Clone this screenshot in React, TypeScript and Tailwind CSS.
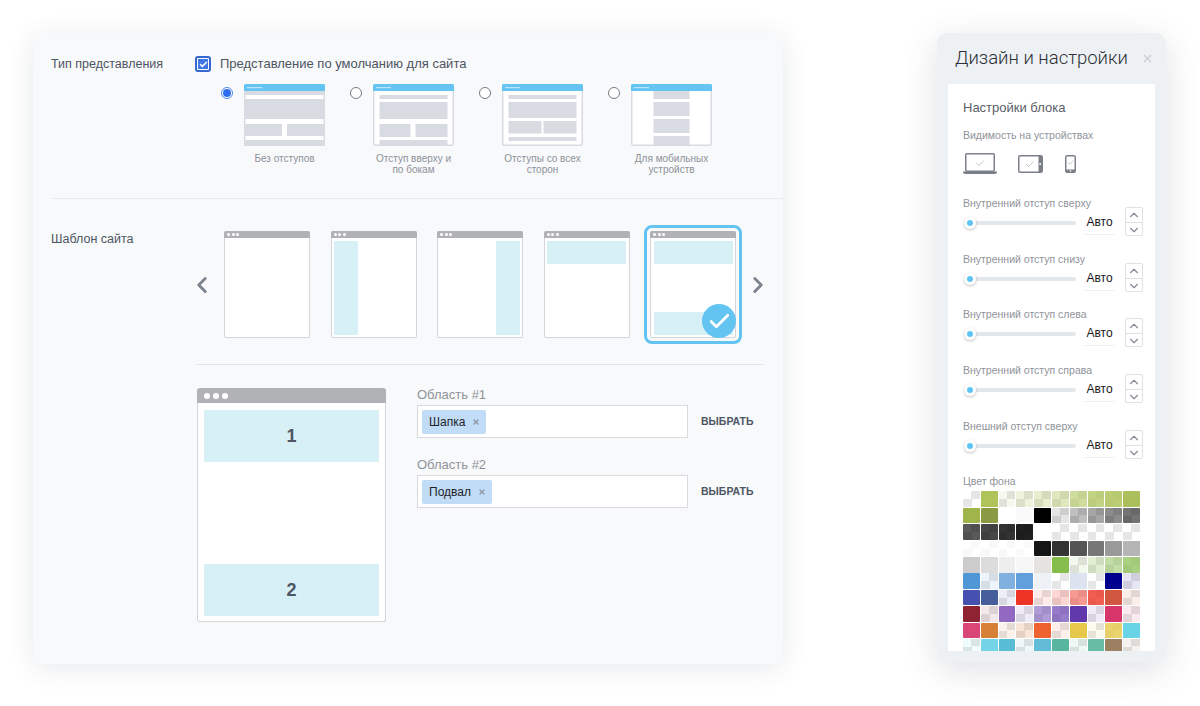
import React from 'react';
import { Check, ChevronDown, ChevronLeft, ChevronRight, ChevronUp, X } from 'lucide-react';

const layouts = [
  {
    caption: 'Без отступов',
    blocks: [
      [0, 7, 81, 4],
      [0, 15, 81, 20],
      [0, 40, 38, 12],
      [43, 40, 38, 12],
      [0, 56, 81, 6],
    ],
  },
  {
    caption: 'Отступ вверху и\nпо бокам',
    blocks: [
      [6.5, 11, 68, 4],
      [6.5, 18, 68, 17],
      [6.5, 40, 31, 13],
      [42.5, 40, 32, 13],
      [6.5, 56, 68, 6],
    ],
  },
  {
    caption: 'Отступы со всех\nсторон',
    blocks: [
      [6.5, 11, 68, 4],
      [6.5, 18, 68, 16],
      [6.5, 37, 33, 12.5],
      [41.5, 37, 33, 12.5],
      [6.5, 53, 68, 4],
    ],
  },
  {
    caption: 'Для мобильных\nустройств',
    blocks: [
      [22.5, 7, 36, 8],
      [22.5, 18, 36, 14],
      [22.5, 35, 36, 14],
      [22.5, 52, 36, 10],
    ],
  },
];

const paddings = [
  'Внутренний отступ сверху',
  'Внутренний отступ снизу',
  'Внутренний отступ слева',
  'Внутренний отступ справа',
  'Внешний отступ сверху',
];

const swatches = [
  'rgba(0,0,0,0)', '#aec45a', 'rgba(174,196,90,.1)', 'rgba(174,196,90,.2)', 'rgba(174,196,90,.3)', 'rgba(174,196,90,.4)', 'rgba(174,196,90,.6)', 'rgba(174,196,90,.75)', 'rgba(174,196,90,.85)', 'rgba(168,188,84,.95)',
  '#a0b44c', '#8a9a42', '#ffffff', '#fafafa', '#000000', 'rgba(0,0,0,.1)', 'rgba(0,0,0,.25)', 'rgba(0,0,0,.35)', 'rgba(0,0,0,.45)', 'rgba(0,0,0,.55)',
  'rgba(0,0,0,.65)', 'rgba(0,0,0,.72)', 'rgba(0,0,0,.8)', 'rgba(0,0,0,.88)', '#ffffff', 'rgba(0,0,0,0)', 'rgba(0,0,0,0)', 'rgba(0,0,0,0)', 'rgba(0,0,0,0)', 'rgba(0,0,0,0)',
  'rgba(255,255,255,.7)', 'rgba(255,255,255,.7)', 'rgba(255,255,255,.7)', 'rgba(255,255,255,.8)', '#151515', '#333333', '#555555', '#777777', '#999999', '#b5b5b5',
  '#cccccc', '#dcdcdc', '#eeeeee', '#f6f6f6', '#e5e2df', '#85bc4c', 'rgba(133,188,76,.1)', 'rgba(133,188,76,.25)', 'rgba(133,188,76,.5)', 'rgba(133,188,76,.7)',
  '#5097d6', 'rgba(80,151,214,.1)', '#80b0e0', '#619fdc', '#eef1f6', 'rgba(0,0,0,0)', '#dce3ef', 'rgba(0,0,0,0)', '#00008f', 'rgba(0,0,143,.1)',
  '#4550b0', '#475e9c', 'rgba(69,80,176,.1)', '#ee3425', 'rgba(238,52,37,.1)', 'rgba(238,52,37,.2)', 'rgba(238,52,37,.5)', 'rgba(238,52,37,.8)', '#d0563f', 'rgba(208,86,63,.1)',
  '#8f2333', 'rgba(143,35,51,.1)', '#9268c0', 'rgba(96,56,172,.1)', 'rgba(96,56,172,.5)', 'rgba(96,56,172,.65)', '#6038ac', 'rgba(96,56,172,.1)', '#d6366a', 'rgba(214,54,106,.1)',
  '#da4676', '#d68038', 'rgba(214,128,56,.1)', 'rgba(214,128,56,.2)', '#ee6130', 'rgba(238,97,48,.1)', '#e6c84a', 'rgba(230,200,74,.1)', 'rgba(230,200,74,.8)', '#68d4e6',
  'rgba(104,212,230,.1)', '#72d4e6', '#58bcd6', 'rgba(88,188,214,.1)', '#62bcd8', '#58b69e', 'rgba(88,182,158,.1)', '#66bca4', '#9b8062', 'rgba(155,128,98,.1)',
];

const LayoutThumb: React.FC<{ blocks: number[][] }> = ({ blocks }) => (
  <svg width="81" height="62" viewBox="0 0 81 62" className="block">
    <rect x="0.75" y="0.75" width="79.5" height="60.5" rx="1.5" fill="#fff" stroke="#d9dbe2" strokeWidth="1.5" />
    {blocks.map((b, i) => (
      <rect key={i} x={b[0]} y={b[1]} width={b[2]} height={b[3]} fill="#d9dbe2" />
    ))}
    <path d="M0 7V1.5A1.5 1.5 0 0 1 1.5 0h78A1.5 1.5 0 0 1 81 1.5V7z" fill="#65c4f2" />
    <rect x="3" y="3" width="15" height="1.2" fill="#b9e6fa" />
  </svg>
);

const Dots: React.FC<{ big?: boolean }> = ({ big }) => (
  <div className={big ? 'flex gap-[3px]' : 'flex gap-[1.5px]'}>
    {[0, 1, 2].map((i) => (
      <span key={i} className={big ? 'h-[6px] w-[6px] rounded-full bg-white' : 'h-[3px] w-[3px] rounded-full bg-white'} />
    ))}
  </div>
);

const TemplateThumb: React.FC<{ kind: string; selected?: boolean }> = ({ kind, selected }) => (
  <div
    className={
      'relative flex h-[107px] w-[86px] shrink-0 flex-col rounded-[2px] border border-t-0 border-[#d3d5da] bg-white' +
      (selected ? ' outline-[3px] outline-offset-[3px] outline-[#63c4f2]' : '')
    }
  >
    <div className="-mx-px flex h-[7px] items-center rounded-t-[2px] bg-[#b0b2b6] pl-[3px]">
      <Dots />
    </div>
    <div className={'flex flex-1 p-[2.5px]' + (kind === 'right' ? ' justify-end' : '') + (kind === 'top' || kind === 'both' ? ' flex-col justify-between' : '')}>
      {kind === 'left' || kind === 'right' ? <div className="h-full w-[24px] rounded-[1px] bg-[#d7f0f5]" /> : null}
      {kind === 'top' || kind === 'both' ? <div className="h-[23px] w-full bg-[#d7f0f5]" /> : null}
      {kind === 'both' ? <div className="h-[23px] w-full bg-[#d7f0f5]" /> : null}
    </div>
    {selected ? (
      <div className="absolute bottom-[-1px] right-[-1px] flex h-[34px] w-[34px] items-center justify-center rounded-full bg-[#63c4f2]">
        <Check size={25} strokeWidth={2.6} className="text-white" />
      </div>
    ) : null}
  </div>
);

const AreaField: React.FC<{ label: string; chip: string }> = ({ label, chip }) => (
  <div>
    <div className="h-[14px] text-[13px] leading-[14px] text-[#8f9399]">{label}</div>
    <div className="mt-[3px] flex items-center">
      <div className="flex h-[33px] w-[271px] items-center border border-[#d8dadd] bg-white pl-[4px]">
        <div className="flex h-[24px] items-center rounded-[2px] bg-[#c0dcf6] pl-[7px] pr-[6px] text-[12px] text-[#1f2329]">
          {chip}
          <X size={8} strokeWidth={4} className="ml-[7px] text-[#8e98a6]" />
        </div>
      </div>
      <div className="ml-[13px] text-[10.5px] font-bold text-[#4e5663]">ВЫБРАТЬ</div>
    </div>
  </div>
);

const PaddingRow: React.FC<{ label: string }> = ({ label }) => (
  <div className="flex h-[55.7px] items-start">
    <div className="w-[162px]">
      <div className="h-[12px] text-[10.5px] leading-[12px] text-[#8f939a]">{label}</div>
      <div className="mt-[2px] flex h-[24px] items-center">
        <div className="relative ml-[7px] h-[4px] w-[106px] rounded-full bg-[#e4e7ea]">
          <div className="absolute left-[-6px] top-[-4px] flex h-[12px] w-[12px] items-center justify-center rounded-full bg-white shadow-[0_1px_3px_rgba(0,0,0,0.25)]">
            <span className="h-[6px] w-[6px] rounded-full bg-[#5fc3f3]" />
          </div>
        </div>
        <div className="ml-[8px] h-[24px] w-[31px] border-b border-[#f0f0f0] text-center text-[12px] leading-[22px] text-[#1a1a1a]">Авто</div>
      </div>
    </div>
    <div className="mt-[10px] flex h-[29px] w-[18px] flex-col divide-y divide-[#dfe2e5] rounded-[2px] border border-[#dfe2e5]">
      <div className="flex flex-1 items-center justify-center">
        <ChevronUp size={14} strokeWidth={2} className="text-[#858c96]" />
      </div>
      <div className="flex flex-1 items-center justify-center">
        <ChevronDown size={14} strokeWidth={2} className="text-[#858c96]" />
      </div>
    </div>
  </div>
);

const App: React.FC = () => {
  return (
    <div className="flex h-[706px] w-[1200px] items-start overflow-hidden bg-white pl-[33px] pt-[33px] font-['Liberation_Sans',Arial,sans-serif]">
      {/* Main card */}
      <div className="h-[631px] w-[750px] rounded-[10px] bg-[#f8f9fb] pt-[23px] shadow-[0_4px_26px_rgba(60,70,90,0.12)]">
        <div className="flex h-[142px] pl-[18px]">
          <div className="w-[144px] text-[12.5px] leading-[16px] text-[#4d5561]">Тип представления</div>
          <div>
            <div className="flex h-[16px] items-center">
              <div className="flex h-[16px] w-[16px] items-center justify-center rounded-[3px] border-2 border-[#3568cf] bg-white">
                <div className="flex h-[10px] w-[10px] items-center justify-center bg-[#3f78e4]">
                  <Check size={9} strokeWidth={4} className="text-white" />
                </div>
              </div>
              <span className="ml-[9px] text-[13px] text-[#4d5561]">Представление по умолчанию для сайта</span>
            </div>
            <div className="ml-[26px] mt-[12px] flex">
              {layouts.map((item, i) => (
                <div key={i} className="flex w-[129px]">
                  <div
                    className={
                      i === 0
                        ? 'mr-[11px] mt-[3px] flex h-[12px] w-[12px] items-center justify-center rounded-full border border-[#4f86f0] bg-white'
                        : 'mr-[11px] mt-[3px] h-[12px] w-[12px] rounded-full border border-[#777b80] bg-white'
                    }
                  >
                    {i === 0 ? <span className="h-[8px] w-[8px] rounded-full bg-[#2f6df0]" /> : null}
                  </div>
                  <div className="w-[81px]">
                    <LayoutThumb blocks={item.blocks} />
                    <div className="mt-[7px] whitespace-pre-line text-center text-[10px] leading-[11px] text-[#8d9199]">{item.caption}</div>
                  </div>
                </div>
              ))}
            </div>
          </div>
        </div>

        <div className="ml-[18px] h-px bg-[#e9ebee]" />

        <div className="flex pl-[18px] pt-[32px]">
          <div className="w-[144px] text-[12.5px] leading-[16px] text-[#4d5561]">Шаблон сайта</div>
          <div className="flex items-center">
            <div className="w-[29px]">
              <ChevronLeft size={26} strokeWidth={2.6} className="-ml-[6px] text-[#7b8290]" />
            </div>
            <div className="flex gap-[20.5px]">
              <TemplateThumb kind="empty" />
              <TemplateThumb kind="left" />
              <TemplateThumb kind="right" />
              <TemplateThumb kind="top" />
              <TemplateThumb kind="both" selected />
            </div>
            <ChevronRight size={26} strokeWidth={2.6} className="ml-[9px] text-[#7b8290]" />
          </div>
        </div>

        <div className="ml-[164px] mr-[20px] mt-[26px] h-px bg-[#e3e5e9]" />

        <div className="flex pl-[164px] pt-[23px]">
          <div className="flex h-[234px] w-[189px] flex-col rounded-[3px] border border-t-0 border-[#d3d5da] bg-white">
            <div className="-mx-px flex h-[15px] items-center rounded-t-[3px] bg-[#b0b2b6] pl-[7px]">
              <Dots big />
            </div>
            <div className="flex flex-1 flex-col justify-between px-[6px] pb-[5px] pt-[7px]">
              <div className="flex h-[52px] items-center justify-center rounded-[1px] bg-[#d7f0f5] text-[18px] font-bold text-[#4e5663]">1</div>
              <div className="flex h-[52px] items-center justify-center rounded-[1px] bg-[#d7f0f5] text-[18px] font-bold text-[#4e5663]">2</div>
            </div>
          </div>
          <div className="ml-[31px] flex flex-col gap-[20px]">
            <AreaField label="Область #1" chip="Шапка" />
            <AreaField label="Область #2" chip="Подвал" />
          </div>
        </div>
      </div>

      {/* Settings panel */}
      <div className="ml-[154px] h-[629px] w-[229px] rounded-[10px] bg-[#eef1f4] shadow-[0_8px_34px_rgba(60,70,90,0.16)]">
        <div className="flex h-[51px] items-center pl-[18px] pr-[12px]">
          <span className="font-['Roboto',sans-serif] text-[18.5px] font-light text-[#2c3036]">Дизайн и настройки</span>
          <X size={13} strokeWidth={2} className="ml-auto text-[#c9cdd2]" />
        </div>
        <div className="mx-[11px] h-[567px] overflow-hidden bg-white pl-[15px] pt-[16px]">
          <div className="h-[16px] text-[13px] leading-[16px] text-[#5b6068]">Настройки блока</div>
          <div className="mt-[13px] h-[12px] text-[10.5px] leading-[12px] text-[#8f939a]">Видимость на устройствах</div>
          <div className="mt-[12px] flex h-[21px] items-center">
            <svg width="34" height="21" viewBox="0 0 34 21" fill="none">
              <rect x="2.75" y="0.75" width="28.5" height="17.5" rx="1" stroke="#7b8088" strokeWidth="1.5" />
              <path d="M0 18.5h34v.5a2 2 0 0 1-2 2H2a2 2 0 0 1-2-2z" fill="#7b8088" />
              <path d="M13.5 10l2.5 2.5 5-5" stroke="#c4c7cb" />
            </svg>
            <svg width="25" height="18" viewBox="0 0 25 18" fill="none" className="ml-[21px]">
              <rect x="0.75" y="0.75" width="23.5" height="16.5" rx="1.5" stroke="#7b8088" strokeWidth="1.5" />
              <rect x="20.5" y="1" width="3.5" height="16" fill="#7b8088" />
              <circle cx="22.2" cy="9" r="0.9" fill="#fff" />
              <path d="M8 9l2.5 2.5 5-5" stroke="#c4c7cb" />
            </svg>
            <svg width="11" height="18" viewBox="0 0 11 18" fill="none" className="ml-[22px]">
              <rect x="0.75" y="0.75" width="9.5" height="16.5" rx="1.5" stroke="#7b8088" strokeWidth="1.5" />
              <rect x="1" y="14.5" width="9" height="3" fill="#7b8088" />
              <circle cx="5.5" cy="16" r="0.8" fill="#fff" />
              <path d="M3 7.5l1.8 1.8 3.4-3.6" stroke="#c4c7cb" />
            </svg>
          </div>
          <div className="mt-[23px]">
            {paddings.map((label) => (
              <PaddingRow key={label} label={label} />
            ))}
          </div>
          <div className="h-[12px] text-[10.5px] leading-[12px] text-[#8f939a]">Цвет фона</div>
          <div className="mt-[4px] grid grid-cols-[repeat(10,16.8px)] auto-rows-[15.5px] gap-x-[1px] gap-y-[0.9px]">
            {swatches.map((color, i) => (
              <div key={i} className="rounded-[1px] bg-[conic-gradient(#e6e6e6_25%,#fff_0_50%,#e6e6e6_0_75%,#fff_0)]">
                <div className="h-full w-full rounded-[1px]" style={{ backgroundColor: color }} />
              </div>
            ))}
          </div>
        </div>
      </div>
    </div>
  );
};

export default App;
